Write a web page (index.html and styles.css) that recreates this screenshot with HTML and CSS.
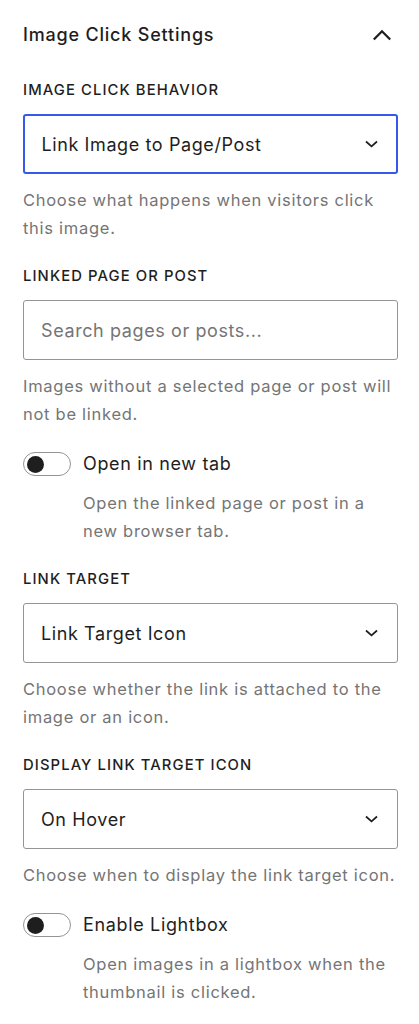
FILE: index.html
```html
<!DOCTYPE html>
<html lang="en">
<head>
  <meta charset="UTF-8">
  <title>Image Click Settings</title>
  <meta name="viewport" content="width=device-width, initial-scale=1">
  <link rel="stylesheet" href="styles.css">
</head>
<body>
  <!-- PANEL: image click settings -->
  <section class="panel">
    <div class="panel-header">
      <h2>Image Click Settings</h2>
      <svg class="chevron-up" width="20" height="12" viewBox="0 0 20 12" aria-hidden="true">
        <path d="M1.8 10.5 10 2.3l8.2 8.2" fill="none" stroke="#1e1e1e" stroke-width="2.3"/>
      </svg>
    </div>

    <div class="field">
      <label class="field-label">Image Click Behavior</label>
      <div class="select focused">
        <span>Link Image to Page/Post</span>
        <svg class="chevron" width="13" height="8" viewBox="0 0 13 8" aria-hidden="true"><path d="M1 1.5 6.5 6.3 12 1.5" fill="none" stroke="#1e1e1e" stroke-width="1.7"/></svg>
      </div>
      <p class="help">Choose what happens when visitors click this image.</p>
    </div>

    <div class="field">
      <label class="field-label">Linked Page or Post</label>
      <div class="input">
        <span class="placeholder">Search pages or posts...</span>
      </div>
      <p class="help">Images without a selected page or post will not be linked.</p>
    </div>

    <div class="field">
      <div class="toggle-row">
        <span class="toggle"><span class="thumb"></span></span>
        <span class="toggle-label">Open in new tab</span>
      </div>
      <p class="help indent">Open the linked page or post in a new browser tab.</p>
    </div>

    <div class="field">
      <label class="field-label">Link Target</label>
      <div class="select">
        <span>Link Target Icon</span>
        <svg class="chevron" width="13" height="8" viewBox="0 0 13 8" aria-hidden="true"><path d="M1 1.5 6.5 6.3 12 1.5" fill="none" stroke="#1e1e1e" stroke-width="1.7"/></svg>
      </div>
      <p class="help">Choose whether the link is attached to the image or an icon.</p>
    </div>

    <div class="field">
      <label class="field-label">Display Link Target Icon</label>
      <div class="select">
        <span>On Hover</span>
        <svg class="chevron" width="13" height="8" viewBox="0 0 13 8" aria-hidden="true"><path d="M1 1.5 6.5 6.3 12 1.5" fill="none" stroke="#1e1e1e" stroke-width="1.7"/></svg>
      </div>
      <p class="help">Choose when to display the link target icon.</p>
    </div>

    <div class="field">
      <div class="toggle-row">
        <span class="toggle"><span class="thumb"></span></span>
        <span class="toggle-label">Enable Lightbox</span>
      </div>
      <p class="help indent">Open images in a lightbox when the thumbnail is clicked.</p>
    </div>
  </section>
</body>
</html>
```

FILE: styles.css
```css
body {
  font-family: Inter, 'Noto Sans', Arial, sans-serif;
  background: #fff;
  margin: 0; padding: 0;
  color: #1e1e1e;
}
.panel {
  padding: 23px 21px 20px 23px;
}
.panel-header {
  display: flex;
  justify-content: space-between;
  align-items: center;
  margin-bottom: 33px;
}
.panel-header h2 {
  margin: 0;
  font-size: 18px;
  font-weight: 500;
  line-height: 24px;
  letter-spacing: 0.8px;
}
.chevron-up { margin-right: 6px; }
.field {
  margin-bottom: 24px;
}
.field-label {
  display: block;
  text-transform: uppercase;
  font-size: 14.8px;
  font-weight: 500;
  line-height: 20px;
  letter-spacing: 1.1px;
  margin-bottom: 14px;
}
.select, .input {
  display: flex;
  align-items: center;
  justify-content: space-between;
  height: 60px;
  box-sizing: border-box;
  border: 1.5px solid #949494;
  border-radius: 3px;
  padding: 0 19px 0 17px;
  font-size: 18px;
  letter-spacing: 0.6px;
}
.select.focused {
  border: 2px solid #3858e9;
  padding-left: 16.5px;
  padding-right: 18.5px;
}
.input .placeholder { color: #757575; }
.help {
  margin: 12px -6px 0 0;
  font-size: 16.5px;
  line-height: 28px;
  letter-spacing: 0.72px;
  color: #757575;
}
.help.indent { margin-left: 60px; margin-top: 13px; }
.toggle-row {
  display: flex;
  align-items: center;
  gap: 12px;
}
.toggle {
  display: inline-flex;
  align-items: center;
  width: 48px;
  height: 24px;
  box-sizing: border-box;
  border: 1.5px solid #949494;
  border-radius: 12px;
  padding-left: 3px;
}
.thumb {
  width: 17px;
  height: 17px;
  border-radius: 50%;
  background: #1e1e1e;
}
.toggle-label {
  font-size: 18px;
  line-height: 24px;
  letter-spacing: 0.65px;
}
```
